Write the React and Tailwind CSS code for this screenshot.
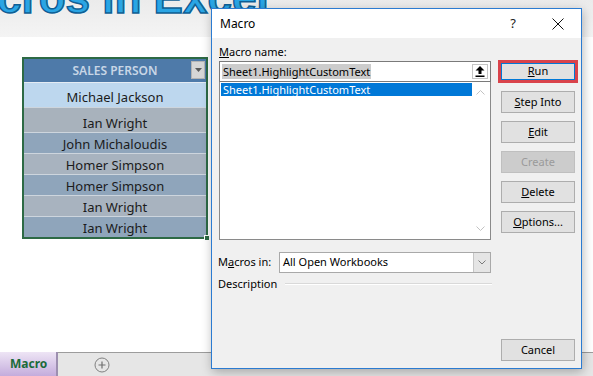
import React from "react";

const rows = [
  { name: "Ian Wright", h: "h-[25px]", bg: "bg-[#a8b2bc]" },
  { name: "John Michaloudis", h: "h-[21px]", bg: "bg-[#8fa5bb]" },
  { name: "Homer Simpson", h: "h-[21px]", bg: "bg-[#a8b3bf]" },
  { name: "Homer Simpson", h: "h-[21px]", bg: "bg-[#8fa5bb]" },
  { name: "Ian Wright", h: "h-[21px]", bg: "bg-[#a8b3bf]" },
  { name: "Ian Wright", h: "h-[21px]", bg: "bg-[#8fa5bb]" },
];

function Btn({ children, disabled }) {
  return (
    <div
      className={
        "h-[22px] w-[74px] mx-[3px] border flex items-center justify-center " +
        (disabled
          ? "bg-[#cccccc] border-[#bfbfbf] text-[#9a9a9a]"
          : "bg-[#e1e1e1] border-[#adadad] text-black")
      }
    >
      {children}
    </div>
  );
}

export default function App() {
  return (
    <div className="relative w-[593px] h-[376px] overflow-hidden bg-white flex flex-col font-['Noto_Sans',sans-serif]">
      {/* banner */}
      <div className="h-[37px] shrink-0 bg-gradient-to-b from-[#ebebeb] to-[#f4f4f4] overflow-hidden">
        <div className="-mt-[24px] -ml-[64px] whitespace-nowrap text-[44px] leading-none font-bold text-[#2aa5e4] font-['Liberation_Sans',Arial,sans-serif] [-webkit-text-stroke:1.5px_#0f5f95] [text-shadow:0_0_3px_#ffffff]">
          Macros in Excel
        </div>
      </div>

      {/* sheet */}
      <div className="flex-1 pl-[22px] pt-[20px]">
        <div className="relative w-[186px] border-2 border-[#2d6a45]">
          <div className="relative h-[23px] bg-[#4e7aa9] flex items-center justify-center text-[12px] font-semibold text-[#c8d6e6]">
            SALES PERSON
            <div className="absolute right-[1px] top-[2px] w-[14px] h-[18px] bg-[#d6d6d6] border border-[#b4b4b4] flex items-center justify-center">
              <svg width="7" height="4" viewBox="0 0 7 4">
                <path d="M0 0 L7 0 L3.5 4 Z" fill="#5a5a5a" />
              </svg>
            </div>
          </div>
          <div className="h-[25px] border-t border-[#e4ebf3] bg-[#bdd7ee] flex items-end justify-center pb-[1px] text-[13px] leading-[18px] text-[#1b1b1b]">
            Michael Jackson
          </div>
          {rows.map((r, i) => (
            <div
              key={i}
              className={
                r.h +
                " " +
                r.bg +
                " border-t border-[#cdd5dd] flex items-end justify-center text-[13px] leading-[18px] text-[#1b1b1b]"
              }
            >
              {r.name}
            </div>
          ))}
          <div className="absolute -right-[4px] -bottom-[4px] w-[6px] h-[6px] bg-[#2d6a45] border border-white" />
        </div>
      </div>

      {/* sheet tabs */}
      <div className="h-[24px] shrink-0 border-t border-[#9c9c9c] bg-[#e6e6e6] flex items-stretch">
        <div className="-mt-px w-[58px] bg-gradient-to-b from-[#eee5f5] to-[#c4acdc] border-r-2 border-[#9d8fb0] flex items-center pl-[10px] text-[12px] font-bold text-[#1b6b3a]">
          Macro
        </div>
        <div className="ml-[36px] flex items-center">
          <svg width="16" height="16" viewBox="0 0 16 16">
            <circle cx="8" cy="8" r="7" fill="none" stroke="#808080" strokeWidth="1" />
            <path d="M8 4.5 V11.5 M4.5 8 H11.5" stroke="#707070" strokeWidth="1.2" />
          </svg>
        </div>
      </div>

      {/* dialog */}
      <div className="absolute left-[211px] top-[8px] w-[371px] h-[361px] border border-[#2b7bd1] bg-[#f0f0f0] shadow-[1px_3px_10px_rgba(0,0,0,0.28)] flex flex-col text-[11px] text-black">
        <div className="h-[29px] shrink-0 bg-white flex items-center pl-[8px]">
          <span className="text-[12px]">Macro</span>
          <span className="ml-auto text-[13px] text-[#222]">?</span>
          <svg className="ml-[36px] mr-[17px]" width="12" height="12" viewBox="0 0 12 12">
            <path d="M0.5 0.5 L11.5 11.5 M11.5 0.5 L0.5 11.5" stroke="#111" strokeWidth="1" />
          </svg>
        </div>

        <div className="flex-1 flex pl-[7px]">
          {/* left column */}
          <div className="w-[273px] flex flex-col pt-[5px]">
            <div className="h-[17px] leading-[17px]">
              <u>M</u>acro name:
            </div>
            <div className="mt-[1px] w-[272px] h-[21px] border border-[#7a7a7a] bg-white flex items-center pl-[2px] pr-[2px]">
              <span className="bg-[#cccccc] leading-[15px] px-[1px]">Sheet1.HighlightCustomText</span>
              <div className="ml-auto w-[16px] h-[15px] border border-[#c4c4c4] bg-white flex items-center justify-center">
                <svg width="10" height="11" viewBox="0 0 10 11">
                  <path d="M5 0 L9.5 4.5 L6.5 4.5 L6.5 8 L3.5 8 L3.5 4.5 L0.5 4.5 Z" fill="#000" />
                  <rect x="0.5" y="9.5" width="9" height="1.5" fill="#000" />
                </svg>
              </div>
            </div>
            <div className="w-[272px] h-[158px] border-x border-b border-[#8a8a8a] bg-white flex p-[1px]">
              <div className="flex-1">
                <div className="h-[13px] bg-[#0078d7] text-white leading-[13px] pl-[2px]">
                  Sheet1.HighlightCustomText
                </div>
              </div>
              <div className="w-[17px] flex flex-col items-center justify-between py-[7px]">
                <svg width="9" height="5" viewBox="0 0 9 5">
                  <path d="M0.5 4.5 L4.5 0.5 L8.5 4.5" fill="none" stroke="#c2c2c2" strokeWidth="1" />
                </svg>
                <svg width="9" height="5" viewBox="0 0 9 5">
                  <path d="M0.5 0.5 L4.5 4.5 L8.5 0.5" fill="none" stroke="#c2c2c2" strokeWidth="1" />
                </svg>
              </div>
            </div>
            <div className="mt-[12px] h-[21px] flex items-center">
              <div className="w-[61px] -ml-[1px]">
                M<u>a</u>cros in:
              </div>
              <div className="w-[212px] h-[21px] border border-[#a9a9a9] bg-white flex items-stretch">
                <div className="flex-1 flex items-center pl-[3px]">All Open Workbooks</div>
                <div className="w-[17px] bg-[#e5e5e5] border-l border-[#c6c6c6] flex items-center justify-center">
                  <svg width="8" height="5" viewBox="0 0 8 5">
                    <path d="M0.5 0.5 L4 4 L7.5 0.5" fill="none" stroke="#7a7a7a" strokeWidth="1" />
                  </svg>
                </div>
              </div>
            </div>
            <div className="mt-[4px] h-[14px] flex items-center -ml-[1px]">
              <span>Description</span>
              <div className="flex-1 ml-[8px] h-[2px] border-t border-[#d9d9d9] border-b border-b-white" />
            </div>
          </div>

          {/* right column */}
          <div className="ml-[6px] w-[80px] flex flex-col pt-[22px] pb-[7px]">
            <div className="h-[23px] w-[80px] border-[3px] border-[#d9434b]">
              <div className="h-full w-full bg-[#e1e1e1] border-[1.5px] border-[#0078d7] flex items-center justify-center">
                <span>
                  <u>R</u>un
                </span>
              </div>
            </div>
            <div className="mt-[8px] flex flex-col gap-[8px]">
              <Btn>
                <span>
                  <u>S</u>tep Into
                </span>
              </Btn>
              <Btn>
                <span>
                  <u>E</u>dit
                </span>
              </Btn>
              <Btn disabled>Create</Btn>
              <Btn>
                <span>
                  <u>D</u>elete
                </span>
              </Btn>
              <Btn>
                <span>
                  <u>O</u>ptions...
                </span>
              </Btn>
            </div>
            <div className="mt-auto">
              <Btn>Cancel</Btn>
            </div>
          </div>
        </div>
      </div>
    </div>
  );
}
